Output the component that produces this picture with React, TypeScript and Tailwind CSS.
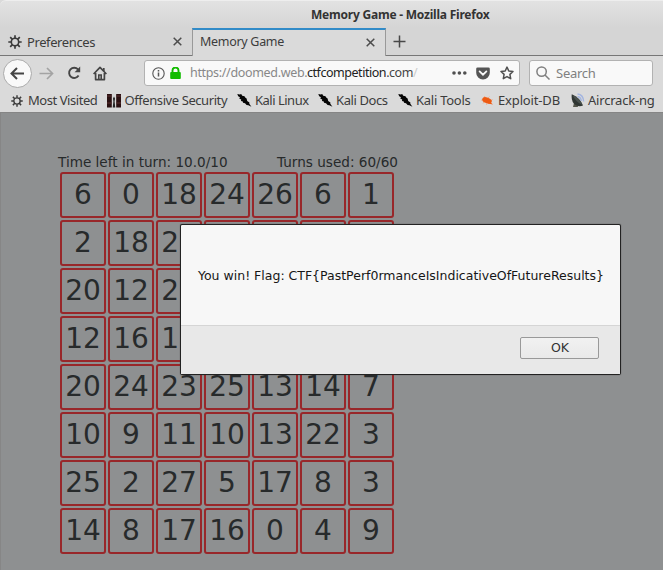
import React from "react";

// null marks a card that lies completely behind the alert
const numbers = [
  [6, 0, 18, 24, 26, 6, 1],
  [2, 18, 21, null, null, null, null],
  [20, 12, 23, null, null, null, null],
  [12, 16, 19, null, null, null, null],
  [20, 24, 23, 25, 13, 14, 7],
  [10, 9, 11, 10, 13, 22, 3],
  [25, 2, 27, 5, 17, 8, 3],
  [14, 8, 17, 16, 0, 4, 9],
];

function Gear({ size }: { size: number }) {
  return (
    <svg width={size} height={size} viewBox="0 0 14 14" fill="none" stroke="#3a3a3a" className="shrink-0">
      <circle cx="7" cy="7" r="3.7" strokeWidth="1.6" />
      <path
        d="M7 0.3v3M7 10.7v3M0.3 7h3M10.7 7h3M2.2 2.2l2.2 2.2M9.6 9.6l2.2 2.2M2.2 11.8l2.2-2.2M9.6 4.4l2.2-2.2"
        strokeWidth="1.7"
      />
    </svg>
  );
}

function Close() {
  return (
    <svg width="9" height="9" viewBox="0 0 9 9" stroke="#4c4c4c" strokeWidth="1.5" className="shrink-0">
      <path d="M0.7 0.7l7.6 7.6M8.3 0.7l-7.6 7.6" />
    </svg>
  );
}

function KaliIcon() {
  return (
    <svg width="15" height="15" viewBox="0 0 15 15" className="shrink-0" fill="#050505">
      <path d="M0.3 1L2.8 1.6L4.2 1L5.2 2.8L7.5 3.2L8.2 4.6L9.6 5.4L10.2 8L12.4 9.6L12.3 10.8L14.4 13.8L11.4 12.2L9.6 12L8 10.2L6 9.8L5.8 8.4L4 8L4.2 6.6L2.2 5.6L3 4.2L1.2 3.2Z" />
    </svg>
  );
}

function OffsecIcon() {
  return (
    <svg width="14" height="14" viewBox="0 0 14 14" className="shrink-0">
      <rect width="14" height="14" fill="#d8d8d8" />
      <rect width="4.8" height="13.5" fill="#2a1112" />
      <rect x="9.2" width="4.8" height="13.5" fill="#2a1112" />
      <path d="M0 2h4.8M0 9h4.8M9.2 2h4.8M9.2 9h4.8" stroke="#5a3030" strokeWidth="1" />
      <path d="M7 2.5l1 2-.4 3 .7 6h-2.6l.7-6-.4-3z" fill="#222" />
    </svg>
  );
}

function ExploitIcon() {
  return (
    <svg width="13" height="11" viewBox="0 0 13 11" className="shrink-0">
      <path d="M1.5 4L0.5 5.5M4 2.5L3.5 1M7 3L8.5 1.5M3 7L2 8.5M6 8L5.5 9.8M10 5.5l1.6-1" stroke="#f3a27c" strokeWidth="0.8" />
      <ellipse cx="6" cy="5.4" rx="5" ry="2.8" transform="rotate(20 6 5.4)" fill="#ee5b13" />
      <path d="M8 6l4 3.6L7 8.4z" fill="#ee5b13" />
    </svg>
  );
}

function AircrackIcon() {
  return (
    <svg width="14" height="15" viewBox="0 0 14 15" className="shrink-0">
      <path d="M6.5 1Q12.3 1.5 12.6 8.5M6.5 3.5Q9.8 4 10.3 8" stroke="#a3b5e0" strokeWidth="1.4" fill="none" />
      <path d="M3 10l-1 4h5L6.5 12z" fill="#55564b" />
      <path d="M0.8 1.2Q-0.2 9 4.6 12Q8 14 12 12.6Q9 4.5 0.8 1.2Z" fill="#303633" />
      <path d="M1.5 2Q8.5 5 11.4 12Q5 9.5 1.5 2Z" fill="#4a524f" />
    </svg>
  );
}

function Bookmark({ icon, label, className }: { icon: React.ReactNode; label: string; className: string }) {
  return (
    <div className={`flex h-[18px] shrink-0 items-center whitespace-nowrap text-[13px] ${className}`}>
      {icon}
      <span>{label}</span>
    </div>
  );
}

function Browser() {
  return (
    <header className="h-[113px] shrink-0 border-b border-[#858585] bg-[#dadada] font-['Noto_Sans',sans-serif] text-[13px] text-[#3c3c3c]">
      <div className="flex h-7 items-center rounded-tl-md border-t border-[#eeeeee] bg-linear-to-b from-[#e2e2e2] to-[#d5d5d5] pl-[311px]">
        <h1 className="whitespace-nowrap text-[12px] font-bold tracking-[-0.22px] text-[#333]">Memory Game - Mozilla Firefox</h1>
      </div>
      <div className="flex h-7 bg-[#d5d5d5]">
        <div className="flex w-[192px] items-center border-b border-[#777] pl-2 pr-[10px]">
          <Gear size={14} />
          <span className="ml-[5px] flex-1 pt-[2px] tracking-[-0.4px]">Preferences</span>
          <Close />
        </div>
        <div className="flex w-[194px] items-center border-x border-t-2 border-x-[#999] border-t-[#318bc8] bg-[#dadada] pb-[2px] pl-[7px] pr-[10px]">
          <span className="flex-1 text-[12.5px] tracking-[-0.3px]">Memory Game</span>
          <Close />
        </div>
        <div className="flex flex-1 items-center border-b border-[#777] pl-[7px]">
          <svg width="13" height="13" viewBox="0 0 13 13" stroke="#484848" strokeWidth="1.5">
            <path d="M6.5 0.5v12M0.5 6.5h12" />
          </svg>
        </div>
      </div>
      <nav className="flex h-[34px] items-center pl-[3px] pr-[10px]">
        <div className="flex size-[29px] shrink-0 items-center justify-center rounded-full border border-[#aaa] bg-[#f9f9f9]">
          <svg width="15" height="13" viewBox="0 0 15 13" fill="none" stroke="#444" strokeWidth="2">
            <path d="M14 6.5H1.8M7 1L1.5 6.5L7 12" />
          </svg>
        </div>
        <svg width="15" height="13" viewBox="0 0 15 13" fill="none" stroke="#a3a3a3" strokeWidth="1.7" className="ml-[7px] shrink-0">
          <path d="M0.5 6.5H13M8 1l5.5 5.5L8 12" />
        </svg>
        <svg width="14" height="14" viewBox="0 0 14 14" fill="none" stroke="#454545" strokeWidth="1.9" className="ml-[13px] shrink-0">
          <path d="M11.6 9.5A5.1 5.1 0 1 1 11 3.4L12 4.4" />
          <path d="M13.2 0.6V6.2H7.6Z" fill="#454545" stroke="none" />
        </svg>
        <svg width="14" height="15" viewBox="0 0 14 15" fill="none" stroke="#454545" strokeWidth="1.7" className="ml-[12px] shrink-0">
          <path d="M0.6 8L7 1.4L13.4 8M2.6 7V13.6H11.4V7" strokeLinejoin="round" />
          <path d="M5.8 13.5V9h2.4v4.5" strokeWidth="1.6" />
          <path d="M10.8 2v3" />
        </svg>
        <div className="ml-[37px] flex h-[26px] w-[376px] shrink-0 items-center rounded-[3px] border border-[#b2b2b2] bg-[#f9f9f9] pl-[7px]">
          <svg width="13" height="13" viewBox="0 0 13 13" fill="none" stroke="#555" className="shrink-0">
            <circle cx="6.5" cy="6.5" r="5.7" strokeWidth="1.1" />
            <path d="M6.5 5.6v4M6.5 3v1.5" strokeWidth="1.5" />
          </svg>
          <svg width="11" height="12" viewBox="0 0 11 12" className="ml-[5px] shrink-0">
            <path d="M2.5 6V3.6a3 3 0 0 1 6 0V6" fill="none" stroke="#12bc00" strokeWidth="1.9" />
            <rect x="0.2" y="5" width="10.6" height="7" rx="1" fill="#12bc00" />
          </svg>
          <div className="ml-[9px] flex w-[246px] shrink-0 whitespace-nowrap pt-px text-[12.5px] text-[#888]">
            <span className="w-[117px] tracking-[-0.33px]">https://doomed.web.</span>
            <span className="tracking-[-0.46px] text-[#222]">ctfcompetition</span>
            <span className="tracking-[-0.46px] text-[#444]">.com</span>
            <span className="text-[#ccc]">/</span>
          </div>
          <svg width="15" height="4" viewBox="0 0 15 4" fill="#505050" className="ml-4 shrink-0">
            <circle cx="2" cy="2" r="1.8" />
            <circle cx="7.4" cy="2" r="1.8" />
            <circle cx="12.8" cy="2" r="1.8" />
          </svg>
          <svg width="14" height="13" viewBox="0 0 14 13" className="ml-[9px] shrink-0">
            <path d="M1.6 0.4h10.8a1.4 1.4 0 0 1 1.4 1.4v4a6.8 6.8 0 0 1-13.6 0v-4a1.4 1.4 0 0 1 1.4-1.4z" fill="#555" />
            <path d="M3.6 4.4L7 7.7l3.4-3.3" fill="none" stroke="#f9f9f9" strokeWidth="1.8" strokeLinecap="round" />
          </svg>
          <svg width="14" height="14" viewBox="0 0 14 14" className="ml-[10px] shrink-0">
            <path d="M7 1.1l1.8 3.9 4.2.5-3.1 2.9.8 4.3L7 10.6l-3.7 2.1.8-4.3L1 5.5l4.2-.5z" fill="none" stroke="#505050" strokeWidth="1.5" strokeLinejoin="round" />
          </svg>
        </div>
        <div className="ml-[9px] flex h-[26px] w-[124px] shrink-0 items-center rounded-[3px] border border-[#b2b2b2] bg-[#f9f9f9] pl-[6px]">
          <svg width="14" height="14" viewBox="0 0 14 14" fill="none" stroke="#808080" strokeWidth="1.5">
            <circle cx="5.6" cy="5.6" r="4.7" />
            <path d="M9 9l4.5 4.5" />
          </svg>
          <span className="ml-[6px] pt-px tracking-[-0.25px] text-[#808080]">Search</span>
        </div>
      </nav>
      <div className="flex h-[21px] items-center pl-[11px]">
        <Bookmark icon={<Gear size={12} />} label="Most Visited" className="w-[96px] gap-[5px] tracking-[-0.45px]" />
        <Bookmark icon={<OffsecIcon />} label="Offensive Security" className="w-[130px] gap-[3.5px] tracking-[-0.42px]" />
        <Bookmark icon={<KaliIcon />} label="Kali Linux" className="w-[81px] gap-[3px] tracking-[-0.5px]" />
        <Bookmark icon={<KaliIcon />} label="Kali Docs" className="w-[80px] gap-[3px] tracking-[-0.4px]" />
        <Bookmark icon={<KaliIcon />} label="Kali Tools" className="w-[83px] gap-[3px] tracking-[-0.25px]" />
        <Bookmark icon={<ExploitIcon />} label="Exploit-DB" className="w-[90px] gap-1 tracking-[-0.15px]" />
        <Bookmark icon={<AircrackIcon />} label="Aircrack-ng" className="gap-[3px] tracking-[-0.2px]" />
      </div>
    </header>
  );
}

function Alert() {
  return (
    <div role="dialog" className="absolute left-[180px] top-[224px] flex h-[151px] w-[441px] flex-col rounded-[2px] border border-[#222] bg-[#f7f7f7] font-['DejaVu_Sans',sans-serif] shadow-[0_0_1px_#333]">
      <p className="flex h-[100px] items-center whitespace-nowrap pl-[17px] pt-[3px] text-[12.5px] text-[#161616]">
        You win! Flag: CTF&#123;PastPerf0rmanceIsIndicativeOfFutureResults&#125;
      </p>
      <div className="flex flex-1 justify-end border-t border-[#d5d5d5] bg-[#e8e8e8] pr-[21px] pt-[11px]">
        <button className="h-[22px] w-[79px] rounded-[2px] border border-[#999] bg-linear-to-b from-[#f1f1f1] to-[#e9e9e9] pl-px pt-px text-[12.5px] leading-none text-[#333]">OK</button>
      </div>
    </div>
  );
}

export default function App() {
  return (
    <div className="relative flex h-[570px] w-[663px] flex-col overflow-hidden bg-[#8e9091]">
      <Browser />
      <main className="flex-1 border-l border-[#868686] pl-[59px] pt-[38px] font-['DejaVu_Sans',sans-serif] text-[#272a2b]">
        <div className="-ml-[2px] flex h-[20.5px] w-[340px] justify-between whitespace-nowrap text-[13.6px] leading-[22px]">
          <span>Time left in turn: 10.0/10</span>
          <span>Turns used: 60/60</span>
        </div>
        <div className="grid w-[334px] grid-cols-7 gap-[2px]">
          {numbers.flat().map((n, i) => (
            <div key={i} className="flex h-[46px] w-[46px] items-center justify-center rounded-[3px] border-2 border-[#98272a] text-[28px] leading-none">
              {n}
            </div>
          ))}
        </div>
      </main>
      <Alert />
    </div>
  );
}
